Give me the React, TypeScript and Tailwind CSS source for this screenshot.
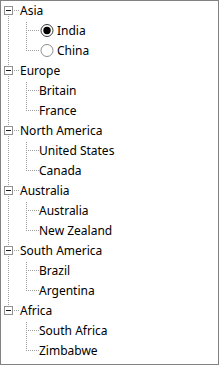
import React from "react";

type Group = { name: string; children: string[]; radios?: boolean[] };

const groups: Group[] = [
  { name: "Asia", children: ["India", "China"], radios: [true, false] },
  { name: "Europe", children: ["Britain", "France"] },
  { name: "North America", children: ["United States", "Canada"] },
  { name: "Australia", children: ["Australia", "New Zealand"] },
  { name: "South America", children: ["Brazil", "Argentina"] },
  { name: "Africa", children: ["South Africa", "Zimbabwe"] },
];

const LINE = "#a0a0a0";
const ROW_H = 20;
const CENTER = 9;

// dotted pixel helpers; rowTop = page y of the row top, svg starts at page x=1
function vDots(c: number, r0: number, r1: number, rowTop: number, key: string) {
  const out: React.ReactElement[] = [];
  for (let r = r0; r <= r1; r++) {
    const px = c + 1;
    const py = rowTop + r;
    if ((px + py) % 2 === 0) out.push(<rect key={`${key}-${r}`} x={c} y={r} width={1} height={1} fill={LINE} />);
  }
  return out;
}
function hDots(r: number, c0: number, c1: number, rowTop: number, key: string) {
  const out: React.ReactElement[] = [];
  for (let c = c0; c <= c1; c++) {
    const px = c + 1;
    const py = rowTop + r;
    if ((px + py) % 2 === 0) out.push(<rect key={`${key}-${c}`} x={c} y={r} width={1} height={1} fill={LINE} />);
  }
  return out;
}

function ParentConnector({ first, last, rowTop }: { first: boolean; last: boolean; rowTop: number }) {
  return (
    <svg width={19} height={ROW_H} className="shrink-0 block">
      {!first && vDots(7, 0, CENTER - 5, rowTop, "t")}
      {!last && vDots(7, CENTER + 5, ROW_H - 1, rowTop, "b")}
      {hDots(CENTER, 13, 17, rowTop, "h")}
      <rect x={3.5} y={CENTER - 3.5} width={8} height={8} fill="#fff" stroke="#919191" />
      <rect x={5} y={CENTER} width={5} height={1} fill="#1a1a1a" />
    </svg>
  );
}

function ChildConnector({ lastGroup, lastChild, rowTop }: { lastGroup: boolean; lastChild: boolean; rowTop: number }) {
  return (
    <svg width={38} height={ROW_H} className="shrink-0 block">
      {!lastGroup && vDots(7, 0, ROW_H - 1, rowTop, "r")}
      {vDots(25, 0, lastChild ? CENTER : ROW_H - 1, rowTop, "c")}
      {hDots(CENTER, 26, 37, rowTop, "h")}
    </svg>
  );
}

function Radio({ checked }: { checked: boolean }) {
  return (
    <svg width={16} height={ROW_H} className="shrink-0 block">
      {checked ? (
        <>
          <circle cx={8} cy={CENTER + 0.5} r={6} fill="#fff" stroke="#3a3a3a" strokeWidth={1} />
          <circle cx={8} cy={CENTER + 0.5} r={3.7} fill="#000" />
        </>
      ) : (
        <circle cx={8} cy={CENTER + 0.5} r={6} fill="#fff" stroke="#8e8e8e" strokeWidth={1} />
      )}
    </svg>
  );
}

export default function App() {
  let row = 0;
  return (
    <div className="w-[219px] h-[365px] border border-[#828282] bg-white overflow-hidden font-['Segoe_UI','Noto_Sans',sans-serif] text-[12px] text-black">
      {groups.map((g, gi) => {
        const first = gi === 0;
        const last = gi === groups.length - 1;
        const parentTop = 1 + row * ROW_H;
        row++;
        return (
          <div key={g.name}>
            <div className="flex h-5 items-center">
              <ParentConnector first={first} last={last} rowTop={parentTop} />
              <span className="leading-5 whitespace-nowrap">{g.name}</span>
            </div>
            {g.children.map((c, ci) => {
              const top = 1 + row * ROW_H;
              row++;
              const radio = g.radios ? g.radios[ci] : undefined;
              return (
                <div key={c + ci} className="flex h-5 items-center">
                  <ChildConnector lastGroup={last} lastChild={ci === g.children.length - 1} rowTop={top} />
                  {radio !== undefined && (
                    <div className="mr-[2px] flex">
                      <Radio checked={radio} />
                    </div>
                  )}
                  <span className="leading-5 whitespace-nowrap">{c}</span>
                </div>
              );
            })}
          </div>
        );
      })}
    </div>
  );
}
